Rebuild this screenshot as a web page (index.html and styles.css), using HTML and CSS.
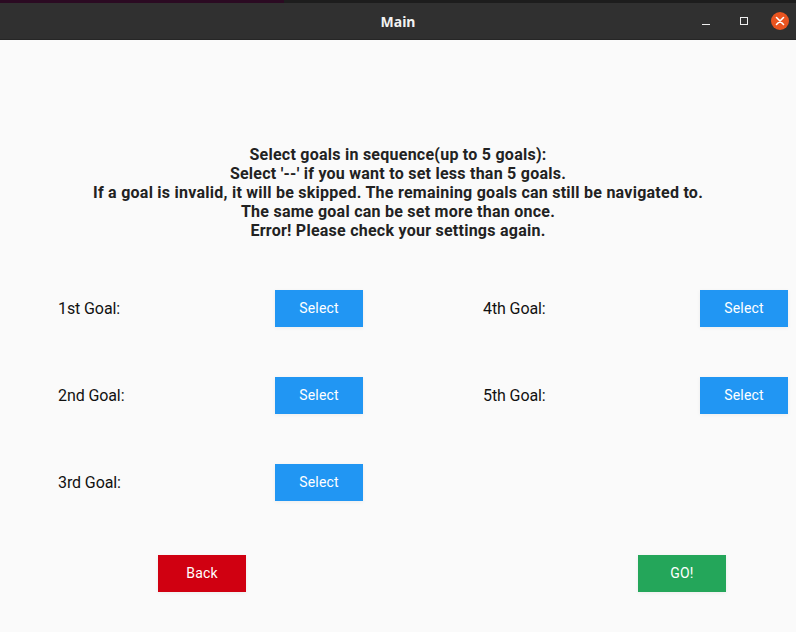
FILE: index.html
```html
<!DOCTYPE html>
<html>
<head>
<meta charset="utf-8">
<link rel="stylesheet" href="styles.css">
</head>
<body>
<div class="window">
  <div class="topstrip"><span class="purple"></span></div>
  <header class="titlebar">
    <div class="title">Main</div>
    <div class="controls">
      <span class="ctl min"></span>
      <span class="ctl max"></span>
      <span class="ctl close">
        <svg width="18" height="18" viewBox="0 0 18 18"><path d="M5.5 5.5 L12.5 12.5 M12.5 5.5 L5.5 12.5" stroke="#fff" stroke-width="1.6" stroke-linecap="round"/></svg>
      </span>
    </div>
  </header>
  <main class="content">
    <div class="info">
      <p>Select goals in sequence(up to 5 goals):</p>
      <p>Select '--' if you want to set less than 5 goals.</p>
      <p>If a goal is invalid, it will be skipped. The remaining goals can still be navigated to.</p>
      <p>The same goal can be set more than once.</p>
      <p>Error! Please check your settings again.</p>
    </div>
    <div class="goals">
      <div class="goal"><span class="label">1st Goal:</span><button class="btn select">Select</button></div>
      <div class="goal"><span class="label">4th Goal:</span><button class="btn select">Select</button></div>
      <div class="goal"><span class="label">2nd Goal:</span><button class="btn select">Select</button></div>
      <div class="goal"><span class="label">5th Goal:</span><button class="btn select">Select</button></div>
      <div class="goal"><span class="label">3rd Goal:</span><button class="btn select">Select</button></div>
    </div>
    <div class="footer">
      <button class="btn back">Back</button>
      <button class="btn go">GO!</button>
    </div>
  </main>
</div>
</body>
</html>
```

FILE: styles.css
```css
html, body {
  margin: 0;
  padding: 0;
  background: #fafafa;
}
.window {
  width: 796px;
  height: 632px;
  display: flex;
  flex-direction: column;
  font-family: Roboto, "Liberation Sans", sans-serif;
}
.topstrip {
  height: 3px;
  background: #1d1d1d;
  display: flex;
}
.topstrip .purple {
  width: 284px;
  background: #2b0a22;
}
.titlebar {
  height: 37px;
  background: #303030;
  display: flex;
  align-items: center;
  justify-content: center;
  position: relative;
  border-bottom: 1px solid #262626;
  box-sizing: border-box;
}
.title {
  color: #f2f2f2;
  font-family: "Noto Sans", "DejaVu Sans", sans-serif;
  font-weight: bold;
  font-size: 14px;
}
.controls {
  position: absolute;
  right: 7px;
  top: 0;
  height: 100%;
  display: flex;
  align-items: center;
  gap: 0;
}
.ctl {
  display: flex;
  align-items: center;
  justify-content: center;
  width: 18px;
  height: 18px;
}
.min {
  margin-right: 20px;
  position: relative;
}
.min::after {
  content: "";
  position: absolute;
  left: 5px;
  top: 12px;
  width: 8px;
  height: 1px;
  background: #eee;
}
.max {
  margin-right: 18px;
  position: relative;
}
.max::after {
  content: "";
  position: absolute;
  left: 5px;
  top: 5px;
  width: 6px;
  height: 6px;
  border: 1px solid #eee;
}
.close {
  background: #e95420;
  border-radius: 50%;
}
.content {
  flex: 1;
  background: #fafafa;
  display: flex;
  flex-direction: column;
}
.info {
  margin-top: 105px;
  text-align: center;
  font-weight: bold;
  font-size: 16px;
  letter-spacing: 0.25px;
  line-height: 19px;
  color: #222;
}
.info p {
  margin: 0;
}
.goals {
  margin-top: 50px;
  padding-left: 58px;
  display: grid;
  grid-template-columns: 425px 305px;
  row-gap: 50px;
}
.goal {
  display: flex;
  align-items: center;
}
.label {
  width: 217px;
  font-size: 16px;
  color: #111;
  letter-spacing: -0.1px;
}
.btn {
  width: 88px;
  height: 37px;
  border: none;
  border-radius: 0;
  color: #fff;
  font-family: Roboto, "Liberation Sans", sans-serif;
  font-size: 14px;
  letter-spacing: 0.2px;
  padding: 0 0 2px 0;
  box-shadow: 0 1px 4px rgba(0,0,0,0.06);
}
.select {
  background: #2196f3;
}
.footer {
  margin-top: 54px;
  padding-left: 158px;
  display: flex;
  gap: 392px;
}
.back {
  background: #d00011;
}
.go {
  background: #24a65a;
}
```
